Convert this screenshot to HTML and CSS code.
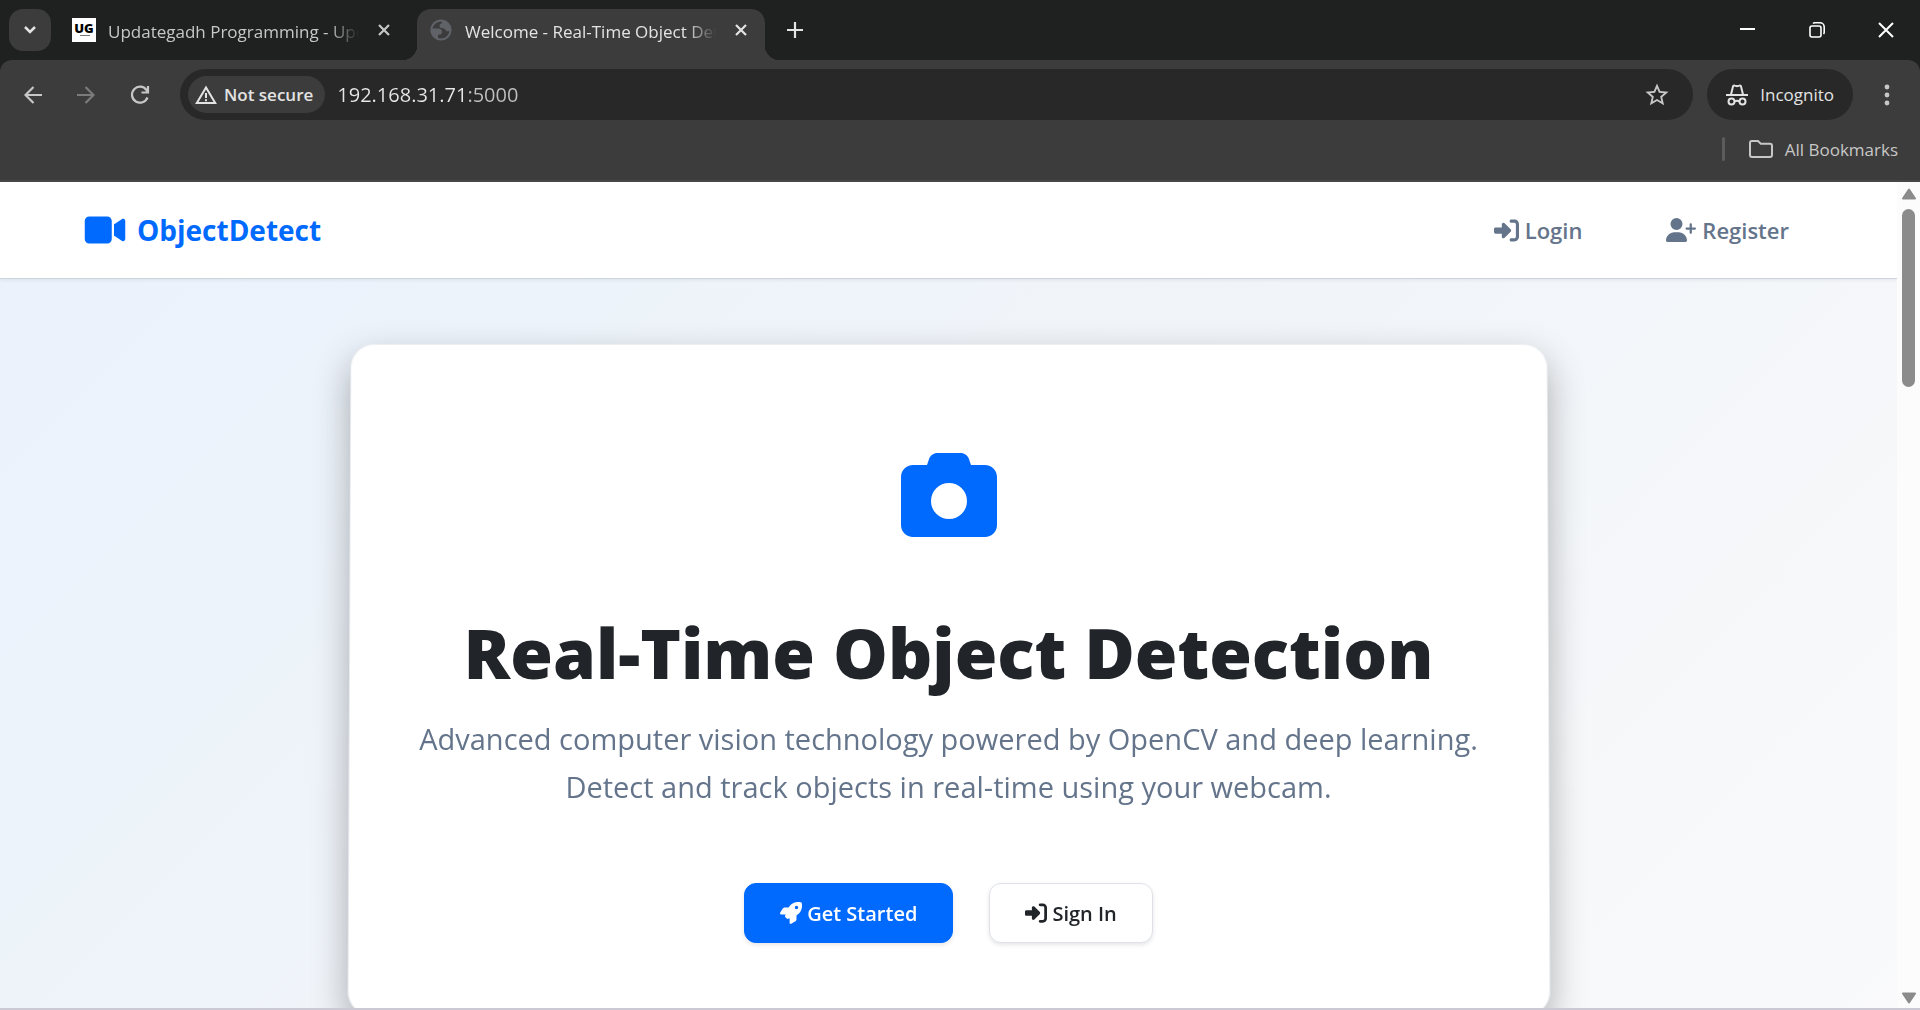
FILE: index.html
```html
<!DOCTYPE html>
<html lang="en">
<head>
<meta charset="UTF-8">
<meta name="viewport" content="width=device-width, initial-scale=1.0">
<title>Welcome - Real-Time Object Detection</title>
<link rel="stylesheet" href="styles.css">
</head>
<body>
    <!-- Browser window -->
    <div class="browser">
        <div class="tab-strip">
            <button class="tab-search" aria-label="Search tabs">
                <svg width="14" height="14" viewBox="0 0 14 14"><path d="M2 4l5 5 5-5" fill="none" stroke="currentColor" stroke-width="2.500"/></svg>
            </button>
            <div class="tab">
                <svg class="favicon" width="24" height="24" viewBox="0 0 24 24">
                    <rect width="24" height="24" fill="#fff"/>
                    <text x="12" y="15" text-anchor="middle" font-size="13" font-weight="900" fill="#000">UG</text>
                    <path d="M8 17.500h10" stroke="#777" stroke-width="1"/>
                </svg>
                <span class="tab-title">Updategadh Programming - Updategadh</span>
                <button class="tab-close" aria-label="Close tab">
                    <svg width="14" height="14" viewBox="0 0 14 14"><path d="M2 2l10 10M12 2L2 12" stroke="currentColor" stroke-width="2.200"/></svg>
                </button>
            </div>
            <div class="tab active">
                <svg class="favicon" width="24" height="24" viewBox="0 0 24 24">
                    <circle cx="12" cy="12" r="9.600" fill="none" stroke="#5f6368" stroke-width="2"/>
                    <path d="M13.500 2.500c-.6 1-.8 1.800-.4 2.700-1.600.4-2.600 1-2.600 2.500 0 1.700 1.300 2.500 3 2.500 2.300 0 2.500 1.300 3.700 2.500 1.300 1 2.800.8 4.300-.2V12C21.500 7 18 3 13.500 2.500zM2.500 10.500h6.800c2.400 0 3.700 1.300 3.700 3.500 0 1.800-1.200 2.800-3.200 2.800H9v4.500C5 20.300 2.300 16.500 2.500 12z" fill="#5f6368"/>
                </svg>
                <span class="tab-title">Welcome - Real-Time Object Detection</span>
                <button class="tab-close" aria-label="Close tab">
                    <svg width="14" height="14" viewBox="0 0 14 14"><path d="M2 2l10 10M12 2L2 12" stroke="currentColor" stroke-width="2.200"/></svg>
                </button>
            </div>
            <button class="new-tab" aria-label="New tab">
                <svg width="16" height="16" viewBox="0 0 16 16"><path d="M8 0v16M0 8h16" stroke="currentColor" stroke-width="2.200"/></svg>
            </button>
            <div class="window-controls">
                <button aria-label="Minimize"><svg width="16" height="16" viewBox="0 0 16 16"><path d="M0 7h15" stroke="currentColor" stroke-width="2"/></svg></button>
                <button aria-label="Restore">
                    <svg width="16" height="16" viewBox="0 0 16 16" fill="none" stroke="currentColor" stroke-width="1.600"><rect x="1" y="4" width="11" height="11" rx="2"/><path d="M4 1.500c.5-.5 1-.7 1.800-.7H11c2.300 0 4.200 1.900 4.200 4.200v5.200c0 .8-.2 1.300-.7 1.800"/></svg>
                </button>
                <button aria-label="Close"><svg width="16" height="16" viewBox="0 0 16 16"><path d="M1 1l14 14M15 1L1 15" stroke="currentColor" stroke-width="2"/></svg></button>
            </div>
        </div>

        <div class="toolbar">
            <div class="toolbar-nav">
                <button aria-label="Back"><svg width="18" height="18" viewBox="0 0 18 18" fill="none" stroke="currentColor" stroke-width="2.200"><path d="M18 9H2M9.500 1L1.500 9l8 8"/></svg></button>
                <button aria-label="Forward" disabled><svg width="18" height="18" viewBox="0 0 18 18" fill="none" stroke="currentColor" stroke-width="2.200"><path d="M0 9h16M8.500 1l8 8-8 8"/></svg></button>
                <button aria-label="Reload"><svg width="20" height="20" viewBox="0 0 20 20" fill="none" stroke="currentColor" stroke-width="2.200"><path d="M17.500 12.500A8 8 0 1 1 16.500 5l1.500 2M11.500 7.500H18V1"/></svg></button>
            </div>
            <div class="omnibox">
                <button class="security">
                    <svg width="22" height="20" viewBox="0 0 22 20"><path d="M11 2.500L1.800 18h18.400z" fill="none" stroke="currentColor" stroke-width="2"/><path d="M11 8v5M11 14.200v2" stroke="currentColor" stroke-width="2"/></svg>
                    Not secure
                </button>
                <input class="url" type="text" value="192.168.31.71:5000" aria-label="Address">
                <button class="star" aria-label="Bookmark this tab">
                    <svg width="24" height="24" viewBox="0 0 24 24"><path d="M22 9.240l-7.190-.62L12 2 9.190 8.630 2 9.240l5.460 4.730L5.820 21 12 17.270 18.180 21l-1.630-7.030L22 9.240zM12 15.400l-3.760 2.270 1-4.280-3.320-2.880 4.380-.38L12 6.100l1.710 4.040 4.380.38-3.320 2.880 1 4.280L12 15.400z" fill="currentColor" transform="translate(-1.800 -1.800) scale(1.150)"/></svg>
                </button>
            </div>
            <button class="incognito">
                <svg width="22" height="22" viewBox="0 0 22 22" fill="none" stroke="currentColor" stroke-width="2"><path d="M0 11h22"/><path d="M5 10.500L7 2.500c.2-.8 1-1.200 1.700-.9L11 2.300l2.300-.7c.7-.3 1.500.1 1.700.9l2 8"/><circle cx="5.500" cy="17.500" r="3"/><circle cx="16.500" cy="17.500" r="3"/><path d="M8.500 17.500c1.500-1 3.500-1 5 0"/></svg>
                Incognito
            </button>
            <button class="menu" aria-label="Menu">
                <svg width="6" height="24" viewBox="0 0 6 24" fill="currentColor"><circle cx="3" cy="4" r="2.400"/><circle cx="3" cy="12" r="2.400"/><circle cx="3" cy="20" r="2.400"/></svg>
            </button>
        </div>

        <div class="bookmarks">
            <span class="divider"></span>
            <button>
                <svg width="24" height="18" viewBox="0 0 24 18"><path d="M1 3c0-1 .8-1.900 1.900-1.900H9l2.800 2.600H21c1.200 0 2 .9 2 2V15c0 1.100-.8 2-2 2H3c-1.200 0-2-.9-2-2z" fill="none" stroke="currentColor" stroke-width="2"/></svg>
                All Bookmarks
            </button>
        </div>
    </div>

    <!-- Page -->
    <div class="viewport">
        <div class="page">
            <nav class="navbar">
                <a class="brand" href="#">
                    <svg width="42" height="36" viewBox="0 0 576 512"><path d="M0 128C0 92.700 28.700 64 64 64H320c35.300 0 64 28.700 64 64V384c0 35.300-28.700 64-64 64H64c-35.300 0-64-28.700-64-64V128zM559.100 99.800c10.400 5.600 16.900 16.400 16.900 28.200V384c0 11.800-6.500 22.600-16.900 28.200s-23 5-32.900-1.600l-96-64L416 337.100V174.900l14.200-9.500 96-64c9.800-6.500 22.400-7.200 32.900-1.600z"/></svg>
                    ObjectDetect
                </a>
                <div class="nav-links">
                    <a href="#">
                        <svg width="25" height="25" viewBox="0 0 512 512"><path d="M217.900 105.900L340.700 228.700c7.200 7.200 11.300 17.100 11.300 27.300s-4.100 20.100-11.300 27.300L217.900 406.100c-6.400 6.400-15 9.900-24 9.900c-18.700 0-33.900-15.200-33.900-33.900V320H32c-17.700 0-32-14.300-32-32v-64c0-17.700 14.300-32 32-32h128v-62.100c0-18.700 15.200-33.900 33.900-33.900c9 0 17.600 3.600 24 9.900zM352 416h64c17.700 0 32-14.300 32-32V128c0-17.700-14.300-32-32-32h-64c-17.700 0-32-14.300-32-32s14.300-32 32-32h64c53 0 96 43 96 96v256c0 53-43 96-96 96h-64c-17.700 0-32-14.300-32-32s14.300-32 32-32z"/></svg>
                        Login
                    </a>
                    <a href="#">
                        <svg width="30" height="24" viewBox="0 0 640 512"><path d="M96 128a128 128 0 1 1 256 0A128 128 0 1 1 96 128zM0 482.300C0 383.800 79.800 304 178.300 304h91.400C368.200 304 448 383.800 448 482.300c0 16.400-13.300 29.700-29.700 29.700H29.700C13.300 512 0 498.700 0 482.300zM504 312V248H440c-13.300 0-24-10.700-24-24s10.700-24 24-24h64V136c0-13.300 10.700-24 24-24s24 10.700 24 24v64h64c13.300 0 24 10.700 24 24s-10.700 24-24 24H552v64c0 13.300-10.700 24-24 24s-24-10.700-24-24z"/></svg>
                        Register
                    </a>
                </div>
            </nav>

            <main class="hero">
                <section class="hero-card">
                    <svg class="hero-icon" width="96" height="84" viewBox="0 32 512 448"><path d="M149.100 64.800L138.700 96H64C28.700 96 0 124.700 0 160V416c0 35.300 28.700 64 64 64H448c35.300 0 64-28.700 64-64V160c0-35.300-28.700-64-64-64H373.300L362.900 64.800C356.400 45.200 338.100 32 317.400 32H194.600c-20.700 0-39 13.200-45.500 32.800zM256 192a96 96 0 1 1 0 192 96 96 0 1 1 0-192z"/></svg>
                    <h1>Real-Time Object Detection</h1>
                    <p>Advanced computer vision technology powered by OpenCV and deep learning.<br>Detect and track objects in real-time using your webcam.</p>
                    <div class="hero-buttons">
                        <a class="btn btn-primary" href="#">
                            <svg width="22" height="22" viewBox="0 0 512 512"><path d="M156.600 384.900L125.700 354c-8.500-8.500-11.500-20.800-7.700-32.200c3-8.900 7-20.500 11.800-33.800L24 288c-8.600 0-16.600-4.600-20.900-12.100s-4.200-16.700 .2-24.100l52.500-88.500c13-21.900 36.500-35.300 61.900-35.300l82.300 0c2.400-4 4.800-7.700 7.200-11.300C289.100-4.100 411.100-8.100 483.900 5.300c11.600 2.100 20.600 11.200 22.800 22.800c13.400 72.900 9.300 194.800-111.400 276.700c-3.500 2.400-7.300 4.800-11.300 7.200v82.300c0 25.400-13.400 49-35.300 61.900l-88.500 52.500c-7.400 4.400-16.600 4.500-24.100 .2s-12.100-12.200-12.100-20.900V380.800c-14.100 4.900-26.400 8.900-35.700 11.900c-11.200 3.600-23.400 .5-31.800-7.800zM384 168a40 40 0 1 0 0-80 40 40 0 1 0 0 80z"/></svg>
                            Get Started
                        </a>
                        <a class="btn btn-outline" href="#">
                            <svg width="22" height="22" viewBox="0 0 512 512"><path d="M217.900 105.900L340.700 228.700c7.200 7.200 11.300 17.100 11.300 27.300s-4.100 20.100-11.300 27.300L217.900 406.100c-6.400 6.400-15 9.900-24 9.900c-18.700 0-33.900-15.200-33.900-33.900V320H32c-17.700 0-32-14.300-32-32v-64c0-17.700 14.300-32 32-32h128v-62.100c0-18.700 15.200-33.900 33.900-33.900c9 0 17.600 3.600 24 9.900zM352 416h64c17.700 0 32-14.300 32-32V128c0-17.700-14.300-32-32-32h-64c-17.700 0-32-14.300-32-32s14.300-32 32-32h64c53 0 96 43 96 96v256c0 53-43 96-96 96h-64c-17.700 0-32-14.300-32-32s14.300-32 32-32z"/></svg>
                            Sign In
                        </a>
                    </div>
                </section>
            </main>
        </div>

        <!-- Scrollbar -->
        <div class="scrollbar">
            <svg width="14" height="12" viewBox="0 0 14 12"><path d="M7 1.500L13 10.500H1z" fill="currentColor" stroke="currentColor" stroke-width="2" stroke-linejoin="round"/></svg>
            <div class="track"><div class="thumb"></div></div>
            <svg width="14" height="12" viewBox="0 0 14 12"><path d="M7 10.500L13 1.500H1z" fill="currentColor" stroke="currentColor" stroke-width="2" stroke-linejoin="round"/></svg>
        </div>
    </div>
</body>
</html>
```
FILE: styles.css
```css
/* General */
* {
    box-sizing: border-box;
}
body {
    margin: 0;
    height: 100vh;
    display: flex;
    flex-direction: column;
    overflow: hidden;
    font-family: "Open Sans", "Noto Sans", sans-serif;
    color: #212529;
    border-bottom: 2px solid #cbc9d3;
}
button,
input {
    font: inherit;
    color: inherit;
    background: none;
    border: 0;
    padding: 0;
}
button {
    display: flex;
    align-items: center;
    justify-content: center;
}
a {
    text-decoration: none;
}
svg {
    flex: none;
}

/* Browser window */
.browser {
    flex: none;
    background: #1f2120;
    color: #e3e3e3;
    font-size: 17px;
}

/* Tabs */
.tab-strip {
    display: flex;
    align-items: flex-end;
    height: 60px;
    padding-left: 9px;
}
.tab-search {
    width: 42px;
    height: 42px;
    margin-bottom: 9px;
    border-radius: 14px;
    background: #3c3c3c;
}
.tab {
    position: relative;
    display: flex;
    align-items: center;
    width: 357px;
    height: 51px;
    padding: 0 26px 9px 12px;
    color: #c7c7c7;
}
.tab:first-of-type {
    margin-left: 9px;
}
.tab.active {
    width: 348px;
    padding-right: 17px;
    background: #3c3c3c;
    border-radius: 14px 14px 0 0;
    color: #e3e3e3;
}
.tab.active::before,
.tab.active::after {
    content: "";
    position: absolute;
    bottom: 0;
    width: 14px;
    height: 14px;
}
.tab.active::before {
    left: -14px;
    background: radial-gradient(circle at 0 0, transparent 14px, #3c3c3c 14px);
}
.tab.active::after {
    right: -14px;
    background: radial-gradient(circle at 100% 0, transparent 14px, #3c3c3c 14px);
}
.tab-title {
    flex: 1;
    margin: 2px 18px 0 12px;
    overflow: hidden;
    white-space: nowrap;
    -webkit-mask-image: linear-gradient(90deg, #000 88%, transparent);
    mask-image: linear-gradient(90deg, #000 88%, transparent);
}
.new-tab {
    width: 42px;
    height: 42px;
    margin: 0 0 9px 9px;
}
.window-controls {
    display: flex;
    align-self: stretch;
    margin-left: auto;
    color: #fff;
}
.window-controls button {
    width: 69px;
}

/* Toolbar */
.toolbar {
    display: flex;
    align-items: center;
    padding: 9px 24px 0 24px;
    background: #3c3c3c;
    border-radius: 12px 12px 0 0;
}
.toolbar-nav {
    display: flex;
    gap: 35px;
    margin-right: 30px;
    color: #c7c7c7;
}
.toolbar-nav button:disabled {
    color: #7b7b7b;
}
.omnibox {
    flex: 1;
    display: flex;
    align-items: center;
    height: 51px;
    padding: 0 24px 0 8px;
    border-radius: 26px;
    background: #282828;
}
.security {
    gap: 7px;
    height: 37px;
    padding: 0 12px 0 7px;
    border-radius: 19px;
    background: #3c3c3c;
    font-weight: 600;
}
.url {
    flex: 1;
    margin-left: 12px;
    font-size: 20px;
    outline: 0;
    color: transparent;
    background: linear-gradient(90deg, #e8e8e8 128px, #c0c0c0 128px);
    -webkit-background-clip: text;
    background-clip: text;
}
.star {
    color: #c7c7c7;
}
.incognito {
    gap: 12px;
    height: 51px;
    margin-left: 14px;
    padding: 0 19px;
    border-radius: 26px;
    background: #282828;
}
.menu {
    margin-left: 31px;
    margin-right: 6px;
    color: #c7c7c7;
}

/* Bookmarks bar */
.bookmarks {
    display: flex;
    align-items: center;
    justify-content: flex-end;
    gap: 24px;
    height: 62px;
    padding: 0 22px 2px 0;
    background: #3c3c3c;
    border-bottom: 2px solid #474747;
    color: #c7c7c7;
}
.bookmarks .divider {
    width: 3px;
    height: 24px;
    border-radius: 2px;
    background: #5c5c5c;
}
.bookmarks button {
    gap: 12px;
}

/* Page */
.viewport {
    flex: 1;
    min-height: 0;
    display: flex;
}
.page {
    flex: 1;
    display: flex;
    flex-direction: column;
    overflow: hidden;
}

/* Navbar */
.navbar {
    position: relative;
    display: flex;
    flex: none;
    align-items: center;
    justify-content: space-between;
    height: 97px;
    padding: 0 108px 0 84px;
    background: #fff;
    border-bottom: 1px solid #ced4de;
    box-shadow: 0 1px 4px rgba(0, 0, 0, 0.08);
}
.brand {
    display: flex;
    align-items: center;
    gap: 11px;
    color: #006aff;
    font-size: 28px;
    font-weight: 700;
}
.nav-links {
    display: flex;
    gap: 84px;
}
.nav-links a {
    display: flex;
    align-items: center;
    gap: 6px;
    color: #64748b;
    font-size: 22px;
    font-weight: 600;
}
.brand svg,
.nav-links svg,
.btn svg,
.hero-icon {
    fill: currentColor;
}

/* Hero */
.hero {
    flex: 1;
    padding: 64px 24px;
    background: linear-gradient(135deg, #ebf2fc, #f1f5f9 50%, #fafafb);
}
.hero-card {
    position: relative;
    z-index: 0;
    display: flex;
    flex-direction: column;
    align-items: center;
    max-width: 1200px;
    margin: 0 auto;
    padding: 110px 72px 72px;
    text-align: center;
}
/* Slightly tilted panel behind the content */
.hero-card::before {
    content: "";
    position: absolute;
    inset: 0;
    z-index: -1;
    border: 1px solid #e9ecf0;
    border-radius: 24px;
    background: #fff;
    box-shadow: 0 15px 36px rgba(0, 0, 0, 0.3);
    transform: perspective(1200px) rotateX(0.5deg);
}
.hero-icon {
    color: #006aff;
}
.hero h1 {
    margin: 72px 0 20px;
    font-size: 69px;
    font-weight: 800;
    line-height: 86px;
}
.hero p {
    margin: 0 0 72px;
    color: #64748b;
    font-size: 29px;
    line-height: 48px;
    white-space: nowrap;
}
.hero-buttons {
    display: flex;
    gap: 36px;
}
.btn {
    display: flex;
    align-items: center;
    gap: 5px;
    height: 60px;
    padding: 0 35px;
    border: 1px solid #dee2e8;
    border-radius: 12px;
    box-shadow: 0 2px 4px rgba(0, 0, 0, 0.1);
    font-size: 20px;
    font-weight: 600;
}
.btn-primary {
    border-color: #006aff;
    background: #006aff;
    color: #fff;
}
.btn-outline {
    background: #fff;
    color: #212529;
}

/* Scrollbar */
.scrollbar {
    display: flex;
    flex-direction: column;
    align-items: center;
    width: 23px;
    padding: 6px 0 4px;
    background: #fcfcfc;
    color: #8b8b8b;
}
.track {
    flex: 1;
    padding: 9px 0;
}
.thumb {
    width: 13px;
    height: 23%;
    border-radius: 7px;
    background: #8b8b8b;
}
```
